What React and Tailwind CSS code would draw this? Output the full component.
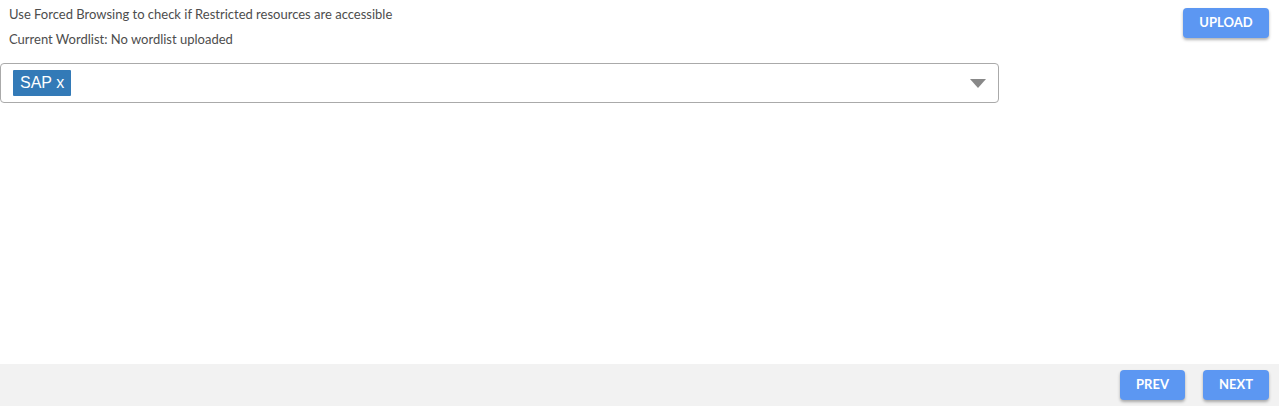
export default function App() {
  return (
    <div className="w-[1279px] h-[406px] flex flex-col bg-white" style={{ fontFamily: "Lato, 'Open Sans', sans-serif" }}>
      <div className="flex-1 relative">
        <div className="flex justify-between">
          <div className="pl-[9px] pt-[4px] text-[13px] text-[#4d4d4d] leading-[21px]">
            <div>Use Forced Browsing to check if Restricted resources are accessible</div>
            <div className="mt-[4px]">Current Wordlist: No wordlist uploaded</div>
          </div>
          <button className="mt-[8px] mr-[10px] w-[86px] h-[30px] rounded-[4px] bg-[#5c97f2] text-white text-[13px] font-bold shadow-[0_2px_3px_rgba(0,0,0,0.3)]">UPLOAD</button>
        </div>
        <div className="mt-[13px] w-[999px] h-[40px] border border-[#aaa] rounded-[4px] flex items-center justify-between pl-[12px] pr-[12px]">
          <span className="bg-[#337ab7] text-white text-[16px] h-[26px] px-[7px] flex items-center rounded-[1px]" style={{ fontFamily: "'Liberation Sans', Arial, sans-serif" }}>SAP x</span>
          <svg width="16" height="9" viewBox="0 0 16 9"><polygon points="0,0 16,0 8,9" fill="#888" /></svg>
        </div>
      </div>
      <div className="h-[42px] bg-[#f2f2f2] flex justify-end items-center gap-[18px] pr-[10px]">
        <button className="w-[65px] h-[30px] rounded-[4px] bg-[#5c97f2] text-white text-[13px] font-bold shadow-[0_2px_3px_rgba(0,0,0,0.3)]">PREV</button>
        <button className="w-[66px] h-[30px] rounded-[4px] bg-[#5c97f2] text-white text-[13px] font-bold shadow-[0_2px_3px_rgba(0,0,0,0.3)]">NEXT</button>
      </div>
    </div>
  );
}
